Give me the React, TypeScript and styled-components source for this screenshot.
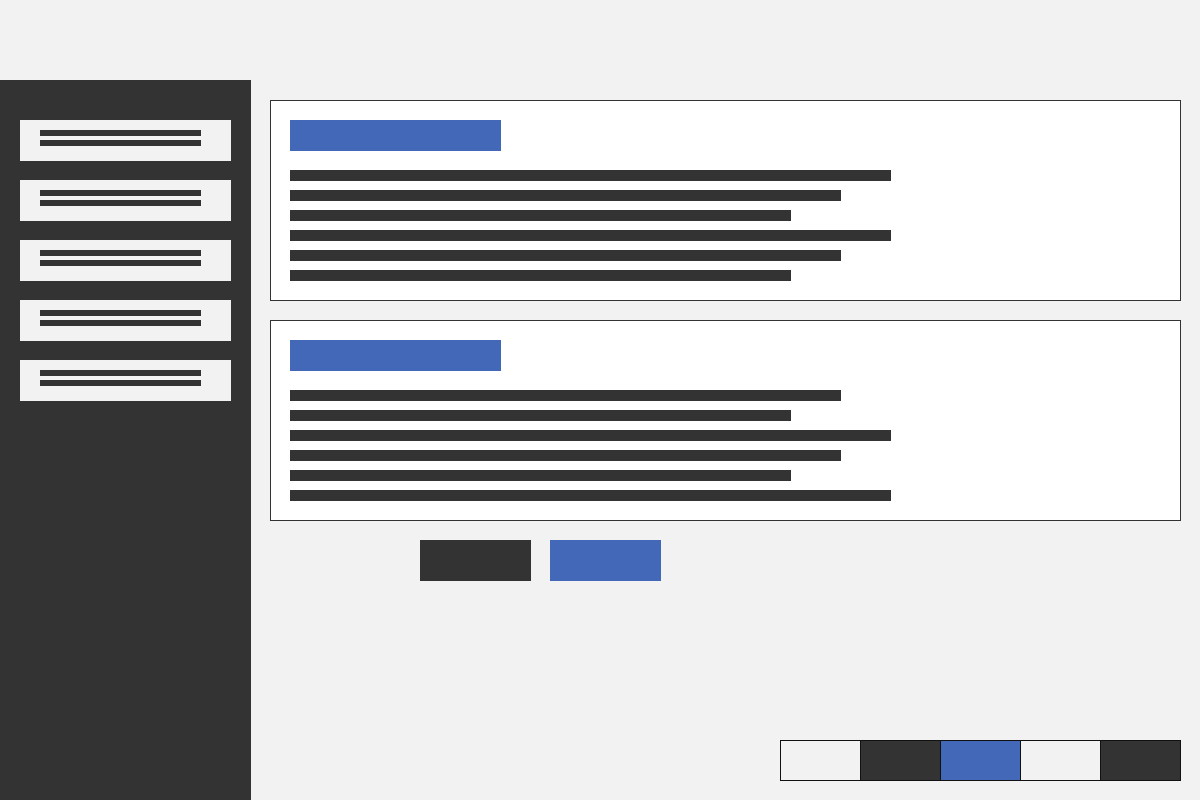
import React from "react";
import styled, { createGlobalStyle } from "styled-components";

const Global = createGlobalStyle`
  html, body { margin: 0; padding: 0; background: #f2f2f2; font-family: "Liberation Sans", Arial, sans-serif; }
  #root { min-height: 100vh; }
`;

const BLUE = "#4468b8";
const DARK = "#333333";
const LIGHT = "#f2f2f2";

const Page = styled.div`
  display: flex;
  flex-direction: column;
  height: 800px;
  overflow: hidden;
`;

const TopBar = styled.div`
  height: 80px;
  flex-shrink: 0;
`;

const Body = styled.div`
  display: flex;
  flex: 1;
`;

const Sidebar = styled.nav`
  width: 251px;
  flex-shrink: 0;
  background: ${DARK};
  padding: 40px 20px 0 20px;
  box-sizing: border-box;
  display: flex;
  flex-direction: column;
  gap: 19px;
`;

const NavItem = styled.div`
  width: 211px;
  height: 41px;
  background: ${LIGHT};
  box-sizing: border-box;
  padding: 10px 30px 0 20px;
  display: flex;
  flex-direction: column;
  gap: 4px;
`;

const NavLine = styled.div`
  width: 161px;
  height: 6px;
  background: ${DARK};
`;

const Main = styled.main`
  flex: 1;
  display: flex;
  flex-direction: column;
  padding: 20px 19px 19px 19px;
  gap: 19px;
`;

const Card = styled.section`
  background: #ffffff;
  border: 1px solid ${DARK};
  padding: 19px;
  display: flex;
  flex-direction: column;
`;

const Title = styled.div`
  width: 211px;
  height: 31px;
  background: ${BLUE};
  margin-bottom: 19px;
`;

const Lines = styled.div`
  display: flex;
  flex-direction: column;
  gap: 9px;
`;

const Line = styled.div<{ $w: number }>`
  width: ${(p) => p.$w}px;
  height: 11px;
  background: ${DARK};
`;

const Actions = styled.div`
  display: flex;
  gap: 19px;
  padding-left: 150px;
`;

const Button = styled.button<{ $primary?: boolean }>`
  width: 111px;
  height: 41px;
  border: none;
  padding: 0;
  background: ${(p) => (p.$primary ? BLUE : DARK)};
`;

const Pager = styled.div`
  margin-top: auto;
  align-self: flex-end;
  display: flex;
`;

const Seg = styled.div<{ $bg: string }>`
  width: 79px;
  height: 39px;
  border: 1px solid #111111;
  background: ${(p) => p.$bg};
  & + & { margin-left: -1px; }
`;

const card1 = [601, 551, 501, 601, 551, 501];
const card2 = [551, 501, 601, 551, 501, 601];

export default function App() {
  return (
    <Page>
      <Global />
      <TopBar />
      <Body>
        <Sidebar>
          {[0, 1, 2, 3, 4].map((i) => (
            <NavItem key={i}>
              <NavLine />
              <NavLine />
            </NavItem>
          ))}
        </Sidebar>
        <Main>
          {[card1, card2].map((lines, ci) => (
            <Card key={ci}>
              <Title />
              <Lines>
                {lines.map((w, i) => (
                  <Line key={i} $w={w} />
                ))}
              </Lines>
            </Card>
          ))}
          <Actions>
            <Button />
            <Button $primary />
          </Actions>
          <Pager>
            <Seg $bg={LIGHT} />
            <Seg $bg={DARK} />
            <Seg $bg={BLUE} />
            <Seg $bg={LIGHT} />
            <Seg $bg={DARK} />
          </Pager>
        </Main>
      </Body>
    </Page>
  );
}
